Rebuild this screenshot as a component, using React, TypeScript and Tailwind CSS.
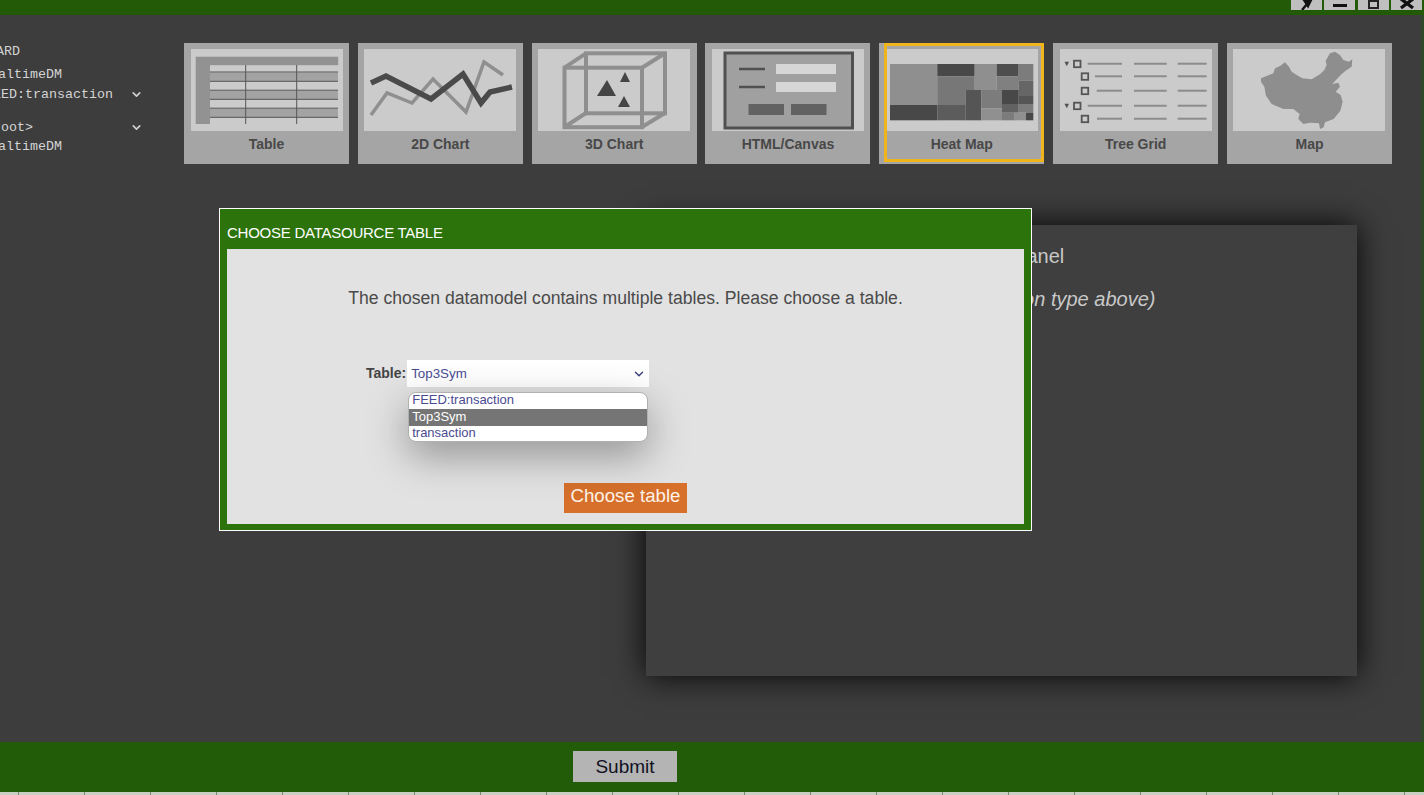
import React from 'react';
import { ChevronDown } from 'lucide-react';

const SANS = "font-['Liberation_Sans',Arial,sans-serif]";

// all thumbnails share a 152x82 canvas
const Thumb: React.FC<{ children: React.ReactNode }> = ({ children }) => (
  <svg viewBox="0 0 152 82" className="block w-[152px] h-[82px] bg-[#cbcbcb]">
    {children}
  </svg>
);

const TableIcon = () => (
  <Thumb>
    <rect x="4.7" y="7.7" width="142.5" height="8.5" fill="#929292" />
    <rect x="4.7" y="16" width="14.3" height="59" fill="#929292" />
    {[23.6, 41.7, 59.7].map((y) => (
      <rect key={y} x="19" y={y} width="128" height="8.7" fill="#a3a3a3" />
    ))}
    {[23, 32.3, 41.2, 50.3, 59.2, 68.3].map((y) => (
      <line key={y} x1="19" x2="147" y1={y} y2={y} stroke="#555" strokeWidth="1" />
    ))}
    <line x1="54.7" x2="54.7" y1="16" y2="75" stroke="#555" strokeWidth="1" />
    <line x1="105.7" x2="105.7" y1="16" y2="75" stroke="#555" strokeWidth="1" />
  </Thumb>
);

const ChartIcon = () => (
  <Thumb>
    <polyline points="7,66 23,44 48,54 69,30 102,63 120,13 139,26" fill="none" stroke="#8f8f8f" strokeWidth="3.5" />
    <polyline points="7,34 22,27 67,50 99,25 117,54 126,43 148,38" fill="none" stroke="#4a4a4a" strokeWidth="5.5" />
  </Thumb>
);

const CubeIcon = () => (
  <Thumb>
    <g fill="none" stroke="#8f8f8f" strokeWidth="4">
      <rect x="48" y="4.3" width="79" height="60" />
      <rect x="26.5" y="18.7" width="77.5" height="59.5" />
      <line x1="26.5" y1="18.7" x2="48" y2="4.3" />
      <line x1="104" y1="18.7" x2="127" y2="4.3" />
      <line x1="26.5" y1="78" x2="48" y2="64" />
      <line x1="104" y1="78" x2="127" y2="64" />
    </g>
    <polygon points="59,47 78,47 69,31" fill="#454545" />
    <polygon points="82,33 92,33 87,23" fill="#454545" />
    <polygon points="80,58 92,58 86,47" fill="#454545" />
  </Thumb>
);

const FormIcon = () => (
  <Thumb>
    <rect x="13" y="4" width="127.5" height="75" fill="#a0a0a0" stroke="#505050" strokeWidth="3" />
    <line x1="27" x2="53" y1="20" y2="20" stroke="#505050" strokeWidth="2.5" />
    <line x1="27" x2="53" y1="38" y2="38" stroke="#505050" strokeWidth="2.5" />
    <rect x="64" y="15" width="60" height="10" fill="#d6d6d6" />
    <rect x="64" y="33" width="60" height="10" fill="#d6d6d6" />
    <rect x="36.5" y="55" width="35.5" height="11" fill="#626262" />
    <rect x="79" y="55" width="35.5" height="11" fill="#626262" />
  </Thumb>
);

const heatCells: [number, number, number, number, string][] = [
  [4, 15, 51.3, 56, '#8f8f8f'],
  [4, 56, 51.3, 71.3, '#484848'],
  [51.3, 15, 88.7, 27.3, '#484848'],
  [51.3, 27.3, 88.7, 41, '#777777'],
  [51.3, 41, 79.7, 56, '#777777'],
  [51.3, 56, 79.7, 71.3, '#5c5c5c'],
  [79.7, 41, 95.3, 71.3, '#555555'],
  [88.7, 15, 110.7, 41, '#8f8f8f'],
  [95.3, 41, 116, 59.3, '#7c7c7c'],
  [95.3, 59.3, 116, 71.3, '#909090'],
  [110.7, 15, 132, 27.3, '#4e4e4e'],
  [110.7, 27.3, 132.7, 41, '#808080'],
  [132, 15, 147.3, 31.7, '#7c7c7c'],
  [132.7, 31.7, 147.3, 47, '#666666'],
  [116, 41, 132.7, 55, '#484848'],
  [132.7, 47, 147.3, 55, '#555555'],
  [116, 55, 132.7, 63.7, '#626262'],
  [132.7, 55, 147.3, 63.7, '#7c7c7c'],
  [116, 63.7, 128.7, 71.3, '#7c7c7c'],
  [128.7, 63.7, 140, 71.3, '#909090'],
  [140, 63.7, 147.3, 71.3, '#484848'],
];

const HeatIcon = () => (
  <Thumb>
    {heatCells.map(([x1, y1, x2, y2, fill]) => (
      <rect key={`${x1}-${y1}`} x={x1} y={y1} width={x2 - x1} height={y2 - y1} fill={fill} />
    ))}
  </Thumb>
);

const treeRows: [number, number, number, boolean][] = [
  [14.7, 17, 27.7, true],
  [27.3, 24.7, 35, false],
  [41.7, 24.7, 36.7, false],
  [56.7, 17, 27.7, true],
  [69.7, 24.7, 37, false],
];

const TreeIcon = () => (
  <Thumb>
    {treeRows.map(([y, box, start, arrow]) => (
      <g key={y}>
        {arrow && <polygon points={`${box - 12.5},${y - 2} ${box - 8},${y - 2} ${box - 10.2},${y + 2.5}`} fill="#505050" />}
        <rect x={box - 3} y={y - 3} width="6.5" height="6.5" fill="none" stroke="#555" strokeWidth="1.8" />
        <line x1={start} x2="62" y1={y} y2={y} stroke="#8c8c8c" strokeWidth="2" />
        <line x1="74" x2="106.7" y1={y} y2={y} stroke="#8c8c8c" strokeWidth="2" />
        <line x1="117.7" x2="146.7" y1={y} y2={y} stroke="#8c8c8c" strokeWidth="2" />
      </g>
    ))}
  </Thumb>
);

const MapIcon = () => (
  <Thumb>
    <polygon
      transform="translate(-8 -9) scale(0.3333)"
      fill="#8e8e8e"
      points="108,115 125,108 145,100 150,85 165,78 180,67 192,80 200,95 215,105 232,115 260,118 285,103 298,90 305,75 302,62 315,40 330,35 345,45 355,60 372,65 382,58 380,80 365,90 350,102 335,118 322,132 340,128 345,140 332,155 347,165 353,185 346,212 326,237 300,247 296,262 285,267 282,250 255,248 235,252 220,237 224,222 205,207 175,207 140,192 123,167 118,140 108,125"
    />
  </Thumb>
);

const charts = [
  { name: 'Table', icon: <TableIcon /> },
  { name: '2D Chart', icon: <ChartIcon /> },
  { name: '3D Chart', icon: <CubeIcon /> },
  { name: 'HTML/Canvas', icon: <FormIcon /> },
  { name: 'Heat Map', icon: <HeatIcon />, selected: true },
  { name: 'Tree Grid', icon: <TreeIcon /> },
  { name: 'Map', icon: <MapIcon /> },
];

const WindowButtons = () => (
  <div className="flex gap-[2.5px] pr-[2px] h-[10px] overflow-hidden">
    <div className="w-[31px] bg-[#bfbfbf] flex justify-center">
      <svg width="14" height="10" viewBox="0 0 14 10">
        <path d="M3 10 L8 4 M5 0 L12 0 L9 6 Z" stroke="#111" strokeWidth="2.4" fill="#111" />
      </svg>
    </div>
    <div className="w-[31px] bg-[#bfbfbf] flex justify-center">
      <div className="w-[14px] h-[3px] bg-[#111] mt-[4px]" />
    </div>
    <div className="w-[31px] bg-[#bfbfbf] flex justify-center">
      <div className="w-[11px] h-[9px] border-2 border-[#222]" />
    </div>
    <div className="w-[31px] bg-[#bfbfbf] flex justify-center">
      <svg width="16" height="10" viewBox="0 0 16 10">
        <path d="M2 -1 L14 8 M14 -1 L2 8" stroke="#111" strokeWidth="3.4" />
      </svg>
    </div>
  </div>
);

const Sidebar = () => (
  <div className="w-[184px] shrink-0 overflow-hidden font-['Liberation_Mono','Courier_New',monospace] text-[13.33px] leading-[16px] text-[#d4d4d4] font-medium whitespace-nowrap">
    <div className="mt-[1px] -ml-[52px]">DASHBOARD</div>
    <div className="mt-[7px] -ml-[18px]">RealtimeDM</div>
    <div className="mt-[4px] -ml-[15px] w-[159px] flex justify-between items-center">
      FEED:transaction
      <ChevronDown size={13} strokeWidth={3} className="text-[#d0d0d0] -mt-[1px] -translate-x-[1px]" />
    </div>
    <div className="mt-[17px] -ml-[15px] w-[159px] flex justify-between items-center">
      {'<root>'}
      <ChevronDown size={13} strokeWidth={3} className="text-[#d0d0d0] -mt-[1px] -translate-x-[1px]" />
    </div>
    <div className="mt-[3px] -ml-[18px]">RealtimeDM</div>
  </div>
);

const ChooseTableModal = () => (
  <div className="absolute left-[219px] top-[208px] w-[813px] h-[323px] border border-white bg-[#2d730b] px-[7px] pb-[6px] flex flex-col">
    <div className="h-[40px] pt-[15px] text-[15px] leading-[17px] tracking-[-0.25px] text-white">CHOOSE DATASOURCE TABLE</div>
    <div className="flex-1 bg-[#e2e2e2] flex flex-col">
      <p className="mt-[38px] text-center text-[17.6px] leading-[22px] text-[#4a4a4a]">
        The chosen datamodel contains multiple tables. Please choose a table.
      </p>
      <div className="mt-[51px] ml-[139px] flex items-start">
        <span className="h-[27px] text-[14px] leading-[26px] font-bold text-[#444] mr-[1px]">Table:</span>
        <div className="relative">
          <div className="w-[242px] h-[27px] bg-white pl-[4px] pr-[3px] flex items-center justify-between text-[13.33px] text-[#4b4b92]">
            Top3Sym
            <ChevronDown size={14} strokeWidth={2.5} className="text-[#3f3f80]" />
          </div>
          <div className="mt-[5px] mx-[1px] h-[50px] bg-white rounded-[8px] overflow-hidden border border-[#b0b0b0] text-[13px] leading-[16px] text-[#4b4b92] shadow-[0_14px_40px_rgba(0,0,0,0.35)]">
            <div className="h-[16px] pl-[3px] -mt-[1px]">FEED:transaction</div>
            <div className="h-[17px] pl-[3px] mt-[1px] bg-[#757575] text-white">Top3Sym</div>
            <div className="h-[16px] pl-[3px] -mt-[1px]">transaction</div>
          </div>
        </div>
      </div>
      <button className="self-center mt-[41px] w-[123px] h-[30px] bg-[#d6702b] text-[18.67px] leading-[26px] pb-[4px] text-[#fdf3e8]">
        Choose table
      </button>
    </div>
  </div>
);

export default function App() {
  return (
    <div className={`relative h-[795px] w-full overflow-hidden flex flex-col bg-[#3d3d3d] ${SANS}`}>
      <div className="h-[15px] shrink-0 bg-[#225a07] flex justify-end">
        <WindowButtons />
      </div>

      <div className="flex-1 border-r-[3px] border-[#2f4a2a] overflow-hidden">
        <div className="flex pt-[28px] h-[149px]">
          <Sidebar />
          <div className="flex gap-[8.83px]">
            {charts.map((c) => (
              <div key={c.name} className="relative w-[165px] h-[121px] bg-[#a5a5a5] px-[6.5px] pt-[6px]">
                {c.icon}
                <div className="text-center text-[14px] leading-[26px] font-bold text-[#484848]">{c.name}</div>
                {c.selected && <div className="absolute left-[5px] right-0 top-0 bottom-[2px] border-[3px] border-[#f0b41c]" />}
              </div>
            ))}
          </div>
        </div>
        <div className="mt-[61px] ml-[646px] w-[711px] h-[451px] bg-[#3f3f3f] shadow-[0_0_30px_rgba(0,0,0,0.95)] pt-[18px] text-[#c8c8c8] text-[20px] leading-[26px] text-center">
          <div className="pr-[18px]">Configure Panel</div>
          <div className="mt-[17px] pr-[9px] italic">(Choose a visualization type above)</div>
        </div>
      </div>

      <div className="h-[50px] shrink-0 bg-[#235c08] flex items-start justify-center pt-[9px] pr-[174px]">
        <button className="w-[104px] h-[31px] bg-[#b4b4b4] text-[19px] leading-[30px] text-[#111122]">Submit</button>
      </div>
      <div className="h-[3px] shrink-0 bg-[#c9cfc3] flex overflow-hidden">
        <div className="w-[19px] shrink-0 border-r border-[#7a8a70]" />
        {Array.from({ length: 21 }).map((_, i) => (
          <div key={i} className="w-[66px] shrink-0 border-r border-[#7a8a70]" />
        ))}
      </div>

      <ChooseTableModal />
    </div>
  );
}
